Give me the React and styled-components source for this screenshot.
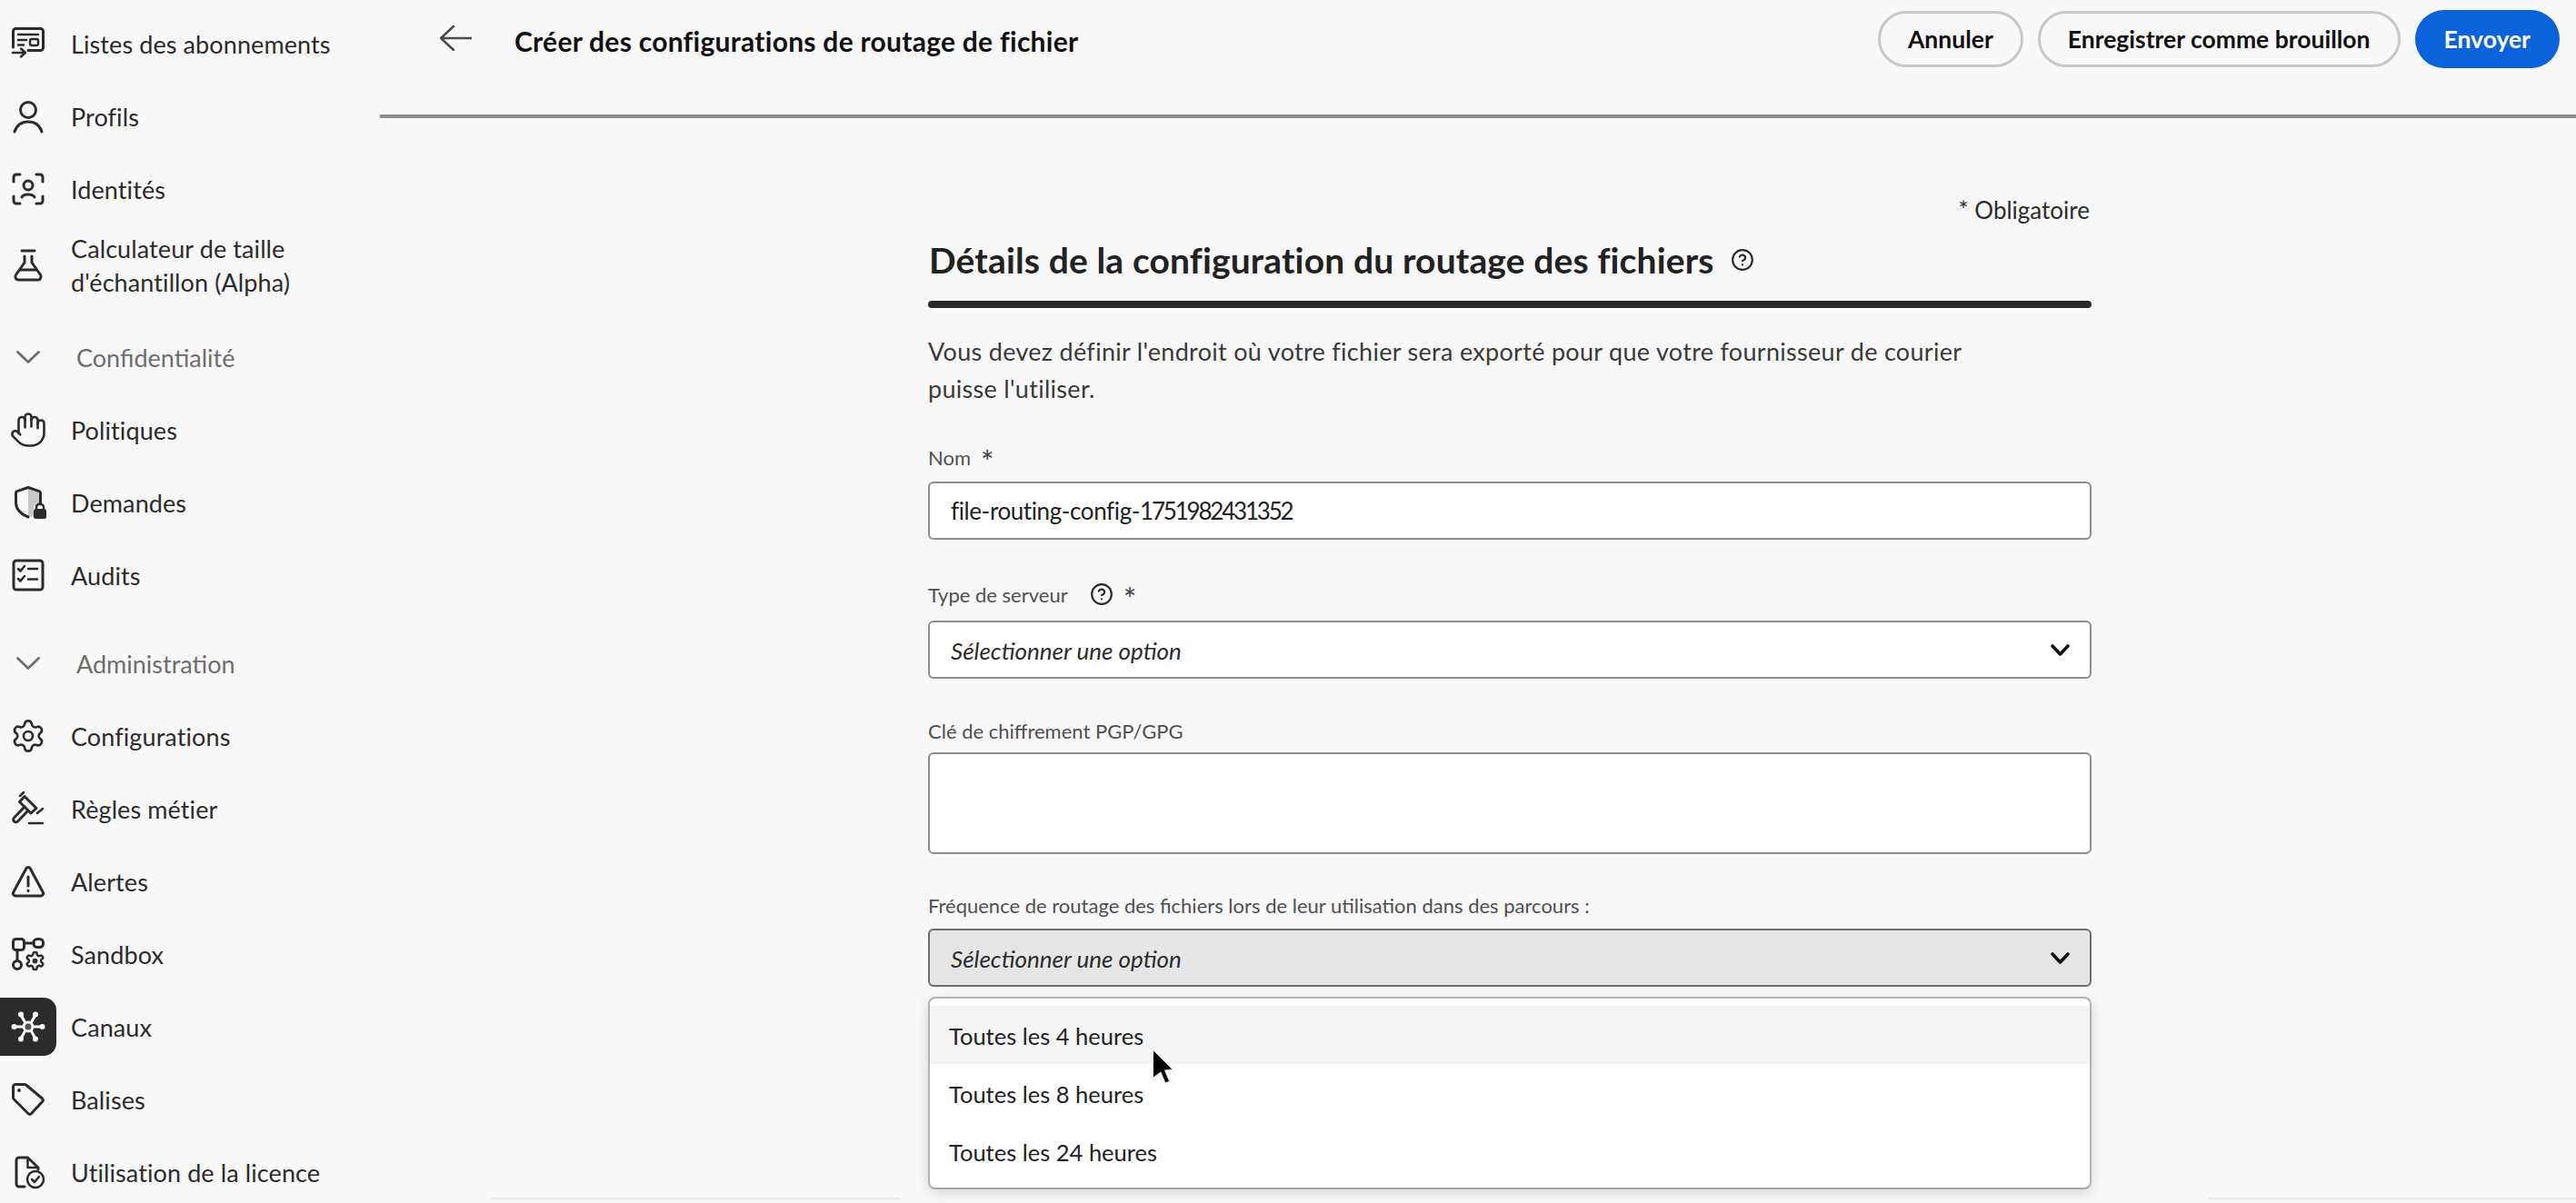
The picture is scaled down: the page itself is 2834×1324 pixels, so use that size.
import React from 'react'
import styled, { createGlobalStyle } from 'styled-components'
import { Hand, Settings, CircleHelp } from 'lucide-react'

const GlobalStyle = createGlobalStyle`
  html, body {
    margin: 0;
    padding: 0;
    height: 100%;
    background: #f8f8f8;
    overflow: hidden;
  }
  * { box-sizing: border-box; }
  body {
    font-family: Lato, "Open Sans", sans-serif;
    color: #2c2c2c;
  }
`

const Svg = ({ children, color = '#2c2c2c', sw = 3 }) => (
  <svg width="36" height="36" viewBox="0 0 36 36" fill="none" stroke={color} strokeWidth={sw} strokeLinecap="round" strokeLinejoin="round" style={{ overflow: 'visible' }}>
    {children}
  </svg>
)

const ListIcon = () => (
  <Svg>
    <path d="M1.500 22V4.500a3 3 0 0 1 3-3h27a3 3 0 0 1 3 3v18a3 3 0 0 1-3 3H18" />
    <path d="M7 8h22M7 14h9M7 19.500h6" strokeWidth="2.500" />
    <rect x="20" y="13" width="9" height="7" rx="2" strokeWidth="2.500" />
    <path d="M1 28h13M10 23.500l5 4.500-5 4.500" strokeWidth="2.500" />
  </Svg>
)
const ProfileIcon = () => (
  <Svg>
    <circle cx="18" cy="11" r="8.500" />
    <path d="M3 35C6 26 13 24 18 24s12 2 15 11" />
  </Svg>
)
const IdentityIcon = () => (
  <Svg>
    <path d="M2 10V5a3 3 0 0 1 3-3h4M27 2h4a3 3 0 0 1 3 3v5M34 26v5a3 3 0 0 1-3 3h-4M9 34H5a3 3 0 0 1-3-3v-5" />
    <circle cx="18" cy="14" r="5" />
    <path d="M11 27c2-4 12-4 14 0" />
  </Svg>
)
const FlaskIcon = () => (
  <Svg>
    <path d="M11 2h14M14 8v7L4.500 28.500a3.500 3.500 0 0 0 3 5.500h21a3.500 3.500 0 0 0 3-5.500L22 15V8" />
    <path d="M9 23h18" />
  </Svg>
)
const ShieldIcon = () => (
  <Svg>
    <path d="M18 2.500 30 6.500V22H24V34L18 33z" fill="#c8c8c8" stroke="none" />
    <path d="M31.500 20V7.500a2 2 0 0 0-1.400-1.900L18 1.500 5.900 5.600a2 2 0 0 0-1.400 1.900V18c0 8 6 13 13.500 16" />
    <rect x="24" y="25" width="14" height="11" rx="2.500" fill="#2c2c2c" stroke="none" />
    <path d="M27 26v-2.500a4 4 0 0 1 8 0V26" strokeWidth="2.500" />
  </Svg>
)
const AuditIcon = () => (
  <Svg>
    <rect x="2" y="2" width="32" height="32" rx="3" />
    <path d="M7 11l2.500 2.500L14 8M7 22l2.500 2.500L14 19M18 11h10M18 22.500h10" strokeWidth="2.500" />
  </Svg>
)
const HammerIcon = () => (
  <Svg>
    <path d="M14 4.500 27 17.500 21 23 8.500 10.500z" />
    <path d="M14 16 2.500 28a2.500 2.500 0 0 0 4 4L18 20" />
    <path d="M9 4l4-4M28 23l6-5M19 34h15" strokeWidth="2.500" />
  </Svg>
)
const AlertIcon = () => (
  <Svg>
    <path d="M16 3.500a2.500 2.500 0 0 1 4 0l14 26a2.800 2.800 0 0 1-2 4.500H4a2.800 2.800 0 0 1-2-4.500z" />
    <path d="M18 13v10M18 28v.5" />
  </Svg>
)
const SandboxIcon = () => (
  <Svg>
    <rect x="1.500" y="1.500" width="12" height="12" rx="3" />
    <rect x="24" y="1.500" width="10.500" height="9" rx="4" />
    <path d="M13.500 6H24M6 13.500V25" />
    <circle cx="6" cy="30" r="4.500" />
    <svg x="14" y="14" width="23" height="23" viewBox="0 0 24 24">
      <path d="M12.220 2h-.44a2 2 0 0 0-2 2v.18a2 2 0 0 1-1 1.730l-.43.250a2 2 0 0 1-2 0l-.15-.080a2 2 0 0 0-2.730.730l-.22.380a2 2 0 0 0 .730 2.730l.15.100a2 2 0 0 1 1 1.720v.510a2 2 0 0 1-1 1.740l-.15.090a2 2 0 0 0-.730 2.730l.22.380a2 2 0 0 0 2.730.730l.15-.080a2 2 0 0 1 2 0l.43.250a2 2 0 0 1 1 1.730V20a2 2 0 0 0 2 2h.44a2 2 0 0 0 2-2v-.18a2 2 0 0 1 1-1.730l.43-.250a2 2 0 0 1 2 0l.15.080a2 2 0 0 0 2.730-.730l.22-.390a2 2 0 0 0-.730-2.730l-.15-.080a2 2 0 0 1-1-1.740v-.500a2 2 0 0 1 1-1.740l.15-.090a2 2 0 0 0 .730-2.730l-.22-.380a2 2 0 0 0-2.730-.730l-.15.080a2 2 0 0 1-2 0l-.43-.250a2 2 0 0 1-1-1.730V4a2 2 0 0 0-2-2z" fill="none" stroke="#2c2c2c" strokeWidth="2.600" />
      <circle cx="12" cy="12" r="3" fill="#2c2c2c" stroke="none" />
    </svg>
  </Svg>
)
const ChannelIcon = () => (
  <Svg color="#fff">
    <path d="M4 18h9M23 18h9M10 5l5 9M26 5l-5 9M10 31l5-9M26 31l-5-9" />
    <circle cx="2.500" cy="18" r="1.500" fill="#fff" />
    <circle cx="33.500" cy="18" r="1.500" fill="#fff" />
    <circle cx="10" cy="4.500" r="1.500" fill="#fff" />
    <circle cx="26" cy="4.500" r="1.500" fill="#fff" />
    <circle cx="10" cy="31.500" r="1.500" fill="#fff" />
    <circle cx="26" cy="31.500" r="1.500" fill="#fff" />
    <circle cx="18" cy="18" r="5" fill="#555" />
  </Svg>
)
const TagIcon = () => (
  <Svg>
    <path d="M4.500 1.500H14a3 3 0 0 1 2.200 1L33.500 17a2.500 2.500 0 0 1 0 3.500L21.500 33.500a2.500 2.500 0 0 1-3.500 0L3 18.500a3 3 0 0 1-1.500-2.500V4.500a2.800 2.800 0 0 1 3-3z" />
    <circle cx="8" cy="8" r="1.200" fill="#2c2c2c" strokeWidth="1.500" />
  </Svg>
)
const LicenseIcon = () => (
  <Svg>
    <path d="M14 34H8a3 3 0 0 1-3-3V5a3 3 0 0 1 3-3h9.500L29 13v2" />
    <path d="M17.500 2.500V13H28" strokeWidth="2.500" />
    <circle cx="26" cy="26" r="9" strokeWidth="2.500" />
    <path d="M22 26l3 3 5-6" strokeWidth="2.500" />
  </Svg>
)

const ChevronSection = () => (
  <svg width="26" height="14" viewBox="0 0 26 14" fill="none" stroke="#6e6e6e" strokeWidth="2.800" strokeLinecap="round" strokeLinejoin="round">
    <path d="M1.500 1.500 13 12.500 24.500 1.500" />
  </svg>
)
const BackArrow = () => (
  <svg width="35" height="28" viewBox="0 0 35 28" fill="none" stroke="#4b4b4b" strokeWidth="2.500" strokeLinecap="round" strokeLinejoin="round">
    <path d="M1 14h34M15 1 1 14l14 13" />
  </svg>
)
const SelectChevron = () => (
  <svg width="21" height="13" viewBox="0 0 21 13" fill="none" stroke="#111" strokeWidth="3.600" strokeLinecap="round" strokeLinejoin="round">
    <path d="M2 2l8.500 9L19 2" />
  </svg>
)
const Pointer = () => (
  <svg width="24" height="38" viewBox="0 0 24 38">
    <path d="M0.500 0.500 22 22 13.500 23 18.500 35 14 37 9 25 0.500 31z" fill="#000" stroke="#fff" strokeWidth="0.800" />
  </svg>
)

const Layout = styled.div`
  display: flex;
  height: 1324px;
  width: 2834px;
  overflow: hidden;
`
const Sidebar = styled.nav`
  width: 418px;
  flex: none;
  padding-top: 8px;
`
const NavRow = styled.div`
  display: flex;
  align-items: center;
  height: ${p => (p.$tall ? '88px' : '80px')};
  margin-top: ${p => (p.$section ? '17px' : '0')};
`
const IconBox = styled.span`
  width: 62px;
  height: 64px;
  margin-right: 16px;
  display: flex;
  flex: none;
  align-items: center;
  justify-content: center;
  border-radius: 0 14px 14px 0;
  background: ${p => (p.$active ? '#2c2c2c' : 'transparent')};
`
const NavLabel = styled.span`
  font-size: 27px;
  line-height: 37px;
  letter-spacing: 0.1px;
  color: #2c2c2c;
`
const SectionLabel = styled.span`
  font-size: 27px;
  color: #6e6e6e;
  margin-left: 6px;
`
const Main = styled.main`
  flex: 1;
  display: flex;
  flex-direction: column;
  position: relative;
`
const Header = styled.header`
  height: 130px;
  flex: none;
  display: flex;
  align-items: center;
  border-bottom: 4px solid #8e8e8e;
  padding: 0 18px 42px 66px;
`
const Title = styled.h1`
  margin: 6px 0 0 47px;
  font-size: 30px;
  letter-spacing: 0.27px;
  font-weight: 700;
  color: #111;
`
const Actions = styled.div`
  margin-left: auto;
  margin-top: 2px;
  display: flex;
  gap: 16px;
  align-items: center;
`
const Button = styled.button`
  height: ${p => (p.$primary ? '64px' : '62px')};
  padding: 0 ${p => (p.$primary ? 32 : 30)}px;
  border-radius: 32px;
  font-family: inherit;
  font-size: 26.500px;
  font-weight: 700;
  color: ${p => (p.$primary ? '#fff' : '#111')};
  background: ${p => (p.$primary ? '#0a63da' : 'transparent')};
  border: ${p => (p.$primary ? 'none' : '3px solid #c8c8c8')};
`
const Form = styled.section`
  width: 1280px;
  margin-left: 603px;
  padding-top: 83px;
`
const Required = styled.div`
  text-align: right;
  font-size: 26px;
  line-height: 36px;
  color: #2c2c2c;
  padding-right: 2px;
`
const Heading = styled.h2`
  margin: 12px 0 0;
  display: flex;
  align-items: center;
  gap: 18px;
  font-size: 39px;
  letter-spacing: 0.14px;
  font-weight: 700;
  line-height: 50px;
  color: #222;
  padding-left: 1px;
`
const Divider = styled.div`
  height: 8px;
  margin-top: 20px;
  border-radius: 4px;
  background: #2c2c2c;
`
const Description = styled.p`
  margin: 27px 0 0;
  font-size: 27px;
  letter-spacing: 0.3px;
  line-height: 41px;
  color: #3a3a3a;
`
const Field = styled.div`
  position: relative;
  margin-top: ${p => p.$top}px;
`
const Label = styled.label`
  display: flex;
  align-items: center;
  height: 30px;
  font-size: 22px;
  color: #505050;
  margin-bottom: ${p => p.$gap}px;
`
const LabelHelp = styled(CircleHelp)`
  margin-left: 24px;
`
const Star = styled.span`
  font-size: 34px;
  line-height: 30px;
  margin: 10px 0 0 11px;
  color: #444;
`
const Control = styled.div`
  display: flex;
  align-items: center;
  justify-content: space-between;
  height: ${p => p.$h || 64}px;
  padding: 0 22px 0 23px;
  font-size: 26px;
  border-radius: 6px;
  background: ${p => (p.$open ? '#e6e6e6' : '#fff')};
  border: 2px solid ${p => (p.$open ? '#6e6e6e' : '#8e8e8e')};
  color: #222;
`
const InputText = styled.span`
  letter-spacing: -0.4px;
`
const Digits = styled.span`
  letter-spacing: -2.2px;
`
const Placeholder = styled.span`
  font-style: italic;
  color: #2c2c2c;
  padding-top: 2px;
`
const Menu = styled.div`
  position: absolute;
  left: 0;
  right: 0;
  top: 116px;
  height: 212px;
  padding: 8px 0;
  background: #fff;
  border: 2px solid #b4b4b4;
  border-bottom-color: #a8a8a8;
  border-radius: 8px;
  box-shadow: 0 4px 14px rgba(0, 0, 0, 0.14);
`
const Option = styled.div`
  height: 64px;
  display: flex;
  align-items: center;
  padding: 2px 0 0 21px;
  font-size: 25.500px;
  color: #222;
  background: ${p => (p.$hover ? '#f4f4f4' : 'transparent')};
`
const Cursor = styled.span`
  position: absolute;
  left: 245px;
  top: 56px;
`
const Footer = styled.div`
  position: absolute;
  left: 122px;
  right: 0;
  bottom: 4px;
  display: flex;
  justify-content: space-between;
`
const FooterLine = styled.div`
  width: ${p => p.$w}px;
  height: 2px;
  background: #e8e8e8;
`

const top = [
  ['Listes des abonnements', ListIcon],
  ['Profils', ProfileIcon],
  ['Identités', IdentityIcon],
]
const privacy = [
  ['Politiques', () => <Hand size={42} strokeWidth={1.500} color="#2c2c2c" />],
  ['Demandes', ShieldIcon],
  ['Audits', AuditIcon],
]
const admin = [
  ['Configurations', () => <Settings size={40} strokeWidth={1.600} color="#2c2c2c" />],
  ['Règles métier', HammerIcon],
  ['Alertes', AlertIcon],
  ['Sandbox', SandboxIcon],
  ['Canaux', ChannelIcon],
  ['Balises', TagIcon],
  ['Utilisation de la licence', LicenseIcon],
]

function Item({ label, Icon, active }) {
  return (
    <NavRow>
      <IconBox $active={active}><Icon /></IconBox>
      <NavLabel>{label}</NavLabel>
    </NavRow>
  )
}

function Section({ label }) {
  return (
    <NavRow $section>
      <IconBox><ChevronSection /></IconBox>
      <SectionLabel>{label}</SectionLabel>
    </NavRow>
  )
}

export default function App() {
  return (
    <Layout>
      <GlobalStyle />
      <Sidebar>
        {top.map(([l, I]) => <Item key={l} label={l} Icon={I} />)}
        <NavRow $tall>
          <IconBox><FlaskIcon /></IconBox>
          <NavLabel>Calculateur de taille<br />d'échantillon (Alpha)</NavLabel>
        </NavRow>
        <Section label="Confidentialité" />
        {privacy.map(([l, I]) => <Item key={l} label={l} Icon={I} />)}
        <Section label="Administration" />
        {admin.map(([l, I]) => <Item key={l} label={l} Icon={I} active={l === 'Canaux'} />)}
      </Sidebar>
      <Main>
        <Header>
          <BackArrow />
          <Title>Créer des configurations de routage de fichier</Title>
          <Actions>
            <Button>Annuler</Button>
            <Button>Enregistrer comme brouillon</Button>
            <Button $primary>Envoyer</Button>
          </Actions>
        </Header>
        <Form>
          <Required>* Obligatoire</Required>
          <Heading>
            Détails de la configuration du routage des fichiers
            <CircleHelp size={26} strokeWidth={2} color="#2c2c2c" />
          </Heading>
          <Divider />
          <Description>
            Vous devez définir l'endroit où votre fichier sera exporté pour que votre fournisseur de courier<br />
            puisse l'utiliser.
          </Description>
          <Field $top={40}>
            <Label $gap={12}>Nom <Star>*</Star></Label>
            <Control>
              <InputText>file-routing-config-<Digits>1751982431352</Digits></InputText>
            </Control>
          </Field>
          <Field $top={45}>
            <Label $gap={14}>
              Type de serveur
              <LabelHelp size={26} strokeWidth={2} color="#2c2c2c" />
              <Star>*</Star>
            </Label>
            <Control>
              <Placeholder>Sélectionner une option</Placeholder>
              <SelectChevron />
            </Control>
          </Field>
          <Field $top={42}>
            <Label $gap={9}>Clé de chiffrement PGP/GPG</Label>
            <Control $h={112} />
          </Field>
          <Field $top={41}>
            <Label $gap={11}>Fréquence de routage des fichiers lors de leur utilisation dans des parcours :</Label>
            <Control $open>
              <Placeholder>Sélectionner une option</Placeholder>
              <SelectChevron />
            </Control>
            <Menu>
              <Option $hover>Toutes les 4 heures</Option>
              <Option>Toutes les 8 heures</Option>
              <Option>Toutes les 24 heures</Option>
              <Cursor><Pointer /></Cursor>
            </Menu>
          </Field>
        </Form>
        <Footer>
          <FooterLine $w={450} />
          <FooterLine $w={404} />
        </Footer>
      </Main>
    </Layout>
  )
}
